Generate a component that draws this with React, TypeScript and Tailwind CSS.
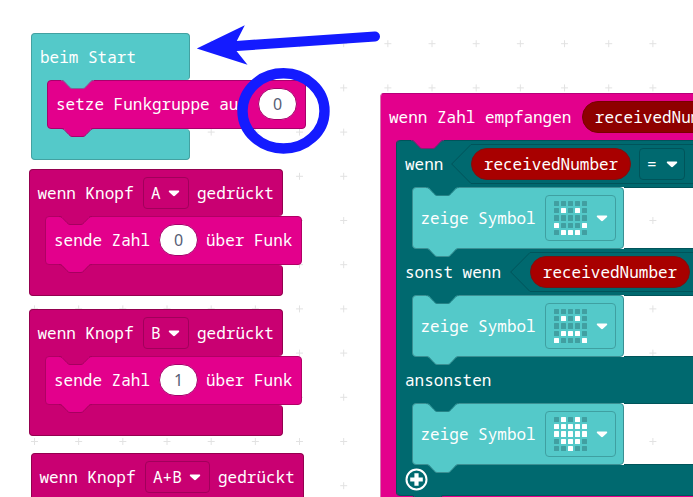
import type { ReactNode } from "react";

/* Caret of a block's drop-down field */
function Caret() {
  return (
    <svg className="block h-[7px] w-[12px] shrink-0" viewBox="0 0 12 7">
      <path d="M1.4 0.4H10.6Q11.8 0.6 11 1.9L7.2 5.6Q6 6.8 4.8 5.6L1 1.9Q0.2 0.6 1.4 0.4Z" fill="#fff" />
    </svg>
  );
}

/* Connector of a statement block: a socket at its top edge or a tab at its bottom edge */
function Connector({ fill, stroke, at }: { fill: string; stroke: string; at: "top" | "bottom" }) {
  const place = at === "top" ? "top-0" : "top-full -mt-px";
  return (
    <svg className={"absolute left-[14px] z-10 h-[10px] w-[34px] " + place} viewBox="0 0 34 10">
      <path d="M0 0H33Q31 0 30 1L25 6.500Q23.500 8.500 22 8.500H11Q9.500 8.500 8 6.500L3 1Q2 0 0 0Z" fill={fill} />
      <path d="M0 0.500Q2 0.500 3 1.500L8 6.700Q9.500 8.500 11 8.500H22Q23.500 8.500 25 6.700L30 1.500Q31 0.500 33 0.500" fill="none" stroke={stroke} />
    </svg>
  );
}

function Row({ className, children }: { className: string; children: ReactNode }) {
  return <div className={"flex items-center whitespace-pre " + className}>{children}</div>;
}

function NumberField({ value }: { value: string }) {
  return (
    <span className="flex h-[32px] w-[39px] shrink-0 items-center justify-center rounded-full border border-[#a7006b] bg-white font-['Noto_Sans',sans-serif] text-[#575e75]">
      {value}
    </span>
  );
}

function Variable({ className }: { className: string }) {
  return (
    <span className={"flex h-[32px] w-[160px] shrink-0 items-center justify-center rounded-full border " + className}>
      receivedNumber
    </span>
  );
}

function ButtonEvent({ place, button, menuWidth, width, children }: {
  place: string; button: string; menuWidth: string; width: string; children?: ReactNode;
}) {
  return (
    <section className={"absolute flex flex-col " + place + " " + width}>
      <Row className="h-[47px] shrink-0 rounded-t-[4px] rounded-br-[4px] border-x border-t border-[#94004f] bg-[#c90072] pl-[7.5px]">
        <span className="w-[105.5px] shrink-0">wenn Knopf</span>
        <span className={"flex h-[32px] shrink-0 items-center justify-between rounded-[4px] border border-[#a1005b] pr-[8px] pl-[7px] " + menuWidth}>
          {button}
          <Caret />
        </span>
        <span className="pl-[8px]">gedrückt</span>
      </Row>
      {children}
    </section>
  );
}

function SendNumber({ value }: { value: string }) {
  return (
    <>
      <div className="flex h-[49px] border-l border-[#94004f]">
        <div className="-mr-[6px] h-full w-[21px] shrink-0 bg-[#c90072]" />
        <div className="relative w-[257px] shrink-0">
          <Row className="h-[49px] rounded-[4px] border border-[#b10065] bg-[#e3008c] pb-[1px] pl-[8px]">
            <span className="w-[105px] shrink-0">sende Zahl</span>
            <NumberField value={value} />
            <span className="pl-[8px]">über Funk</span>
          </Row>
          <Connector at="top" fill="#c90072" stroke="#a6005f" />
          <Connector at="bottom" fill="#e3008c" stroke="#a6005f" />
        </div>
      </div>
      <div className="h-[31px] rounded-b-[4px] rounded-tr-[4px] border-x border-b border-[#94004f] bg-[#c90072]" />
    </>
  );
}

/* 5 by 5 LED picture, one string for each line */
function ShowIcon({ leds }: { leds: string[] }) {
  return (
    <div className="flex h-[62px]">
      <div className="-mr-[6px] w-[21px] shrink-0 bg-[#00696f]" />
      <div className="relative w-[212px] shrink-0">
        <Row className="h-[62px] rounded-[4px] border border-[#3a9093] bg-[#54c9c9] pl-[7.5px]">
          <span className="w-[124.5px] shrink-0">zeige Symbol</span>
          <span className="flex h-[46px] w-[71px] items-center justify-between rounded-[4px] border border-[#3fa0a1] pr-[7px] pl-[8px]">
            <span className="grid grid-cols-5 gap-x-[1.7px] gap-y-[1.9px]">
              {leds.join("").split("").map((led, i) => (
                <i key={i} className={"size-[5.3px] rounded-[0.5px] " + (led === "#" ? "bg-white" : "bg-[#419fa1]")} />
              ))}
            </span>
            <Caret />
          </span>
        </Row>
        <Connector at="top" fill="#00696f" stroke="#258387" />
        <Connector at="bottom" fill="#54c9c9" stroke="#3a9093" />
      </div>
      <div className="grow border-y border-[#00545a]" />
    </div>
  );
}

/* Hexagonal condition that runs on past the right edge of the workspace */
function Condition({ children }: { children: ReactNode }) {
  return (
    <div className="relative flex h-[40px] w-[360px] shrink-0 items-center pl-[20px]">
      <svg className="absolute inset-0" width="360" height="40" viewBox="0 0 360 40">
        <path d="M360 0.500H20L0.700 20L20 39.500H360" fill="none" stroke="#00545a" />
      </svg>
      <div className="relative flex items-center gap-[8px]">{children}</div>
    </div>
  );
}

const columns = Array.from({ length: 15 }, (_, i) => 34 + i * 44.17);
const lines = Array.from({ length: 11 }, (_, i) => 43.7 + i * 44.2);

export default function App() {
  return (
    <main className="relative h-[497px] w-[693px] overflow-hidden bg-white font-['Noto_Sans_Mono','Droid_Sans_Mono','DejaVu_Sans_Mono',monospace] text-[16px] leading-[20px] text-white">
      <svg className="absolute inset-0" width="693" height="497">
        {lines.map((y) => columns.map((x) => (
          <path key={x + "-" + y} d={`M${x - 3} ${y}h7M${x + 0.5} ${y - 3.5}v7`} stroke="#e2e2e2" fill="none" />
        )))}
      </svg>

      <section className="absolute top-[33px] left-[31px] flex w-[159px] flex-col">
        <Row className="h-[47px] rounded-t-[4px] rounded-br-[4px] border-x border-t border-[#43a1a1] bg-[#54c9c9] pl-[8px]">beim Start</Row>
        <div className="flex h-[49px] border-l border-[#43a1a1]">
          <div className="-mr-[6px] w-[21px] shrink-0 bg-[#54c9c9]" />
          <div className="relative w-[259px] shrink-0">
            <Row className="h-[49px] rounded-[4px] border border-[#a7006b] bg-[#e3008c] pb-[1px] pl-[8px]">
              <span className="w-[202px] shrink-0">setze Funkgruppe auf</span>
              <NumberField value="0" />
            </Row>
            <Connector at="top" fill="#54c9c9" stroke="#7b6a96" />
            <Connector at="bottom" fill="#e3008c" stroke="#a7006b" />
          </div>
        </div>
        <div className="h-[31px] rounded-b-[4px] rounded-tr-[4px] border-x border-b border-[#43a1a1] bg-[#54c9c9]" />
      </section>

      <ButtonEvent place="top-[169px] left-[29px]" width="w-[254px]" button="A" menuWidth="w-[46px]">
        <SendNumber value="0" />
      </ButtonEvent>
      <ButtonEvent place="top-[309px] left-[29px]" width="w-[254px]" button="B" menuWidth="w-[46px]">
        <SendNumber value="1" />
      </ButtonEvent>
      <ButtonEvent place="top-[453px] left-[31px]" width="w-[273px]" button="A+B" menuWidth="w-[65px]">
        <div className="h-[49px] bg-[#c90072]" />
      </ButtonEvent>

      <section className="absolute top-[93px] left-[380px] flex w-[440px] flex-col">
        <Row className="h-[47px] rounded-tl-[4px] border-t border-l border-t-[#b6007a] border-l-[#d875b0] bg-[#e3008c] pl-[8px]">
          <span className="w-[193px] shrink-0">wenn Zahl empfangen</span>
          <Variable className="border-[#780000] bg-[#8e0000]" />
        </Row>
        <div className="flex border-l border-[#d875b0]">
          <div className="-mr-[6px] w-[21px] shrink-0 bg-[#e3008c]" />
          <div className="relative w-[424px] rounded-l-[4px] border-l border-[#00545a]">
            <Row className="h-[47px] rounded-tl-[4px] border-t border-[#00545a] bg-[#00696f] pl-[8px]">
              <span className="w-[46px] shrink-0">wenn</span>
              <Condition>
                <Variable className="border-[#7e1010] bg-[#a80000]" />
                <span className="flex h-[32px] w-[46px] shrink-0 items-center justify-between rounded-[4px] border border-[#00545a] pr-[8px] pl-[7px]">
                  = <Caret />
                </span>
                <NumberField value="0" />
              </Condition>
            </Row>
            <ShowIcon leds={[".....", ".#.#.", ".....", "#...#", ".###."]} />
            <Row className="h-[46px] bg-[#00696f] pl-[8px]">
              <span className="w-[105px] shrink-0">sonst wenn</span>
              <Condition>
                <Variable className="border-[#7e1010] bg-[#a80000]" />
              </Condition>
            </Row>
            <ShowIcon leds={[".....", ".#.#.", ".....", ".###.", "#...#"]} />
            <Row className="h-[46px] bg-[#00696f] pl-[8px]">ansonsten</Row>
            <ShowIcon leds={[".#.#.", "#####", "#####", ".###.", "..#.."]} />
            <div className="h-[31px] rounded-bl-[4px] border-b border-[#00545a] bg-[#00696f] pt-[3px] pl-[8px]">
              <svg className="block" width="23" height="23" viewBox="0 0 23 23">
                <circle cx="11.500" cy="11.500" r="10" fill="none" stroke="#fff" strokeWidth="2" />
                <path d="M11.500 7.300V15.700M7.300 11.500H15.700" stroke="#fff" strokeWidth="4.200" strokeLinecap="square" strokeLinejoin="round" />
              </svg>
            </div>
            <Connector at="top" fill="#e3008c" stroke="#7a2670" />
            <Connector at="bottom" fill="#00696f" stroke="#00545a" />
          </div>
        </div>
        <div className="h-[31px] border-l border-[#d875b0] bg-[#e3008c]" />
      </section>

      <svg className="absolute top-0 left-0 z-20" width="400" height="170" viewBox="0 0 400 170">
        <ellipse cx="283.500" cy="110.900" rx="41" ry="37.600" fill="none" stroke="#141bff" strokeWidth="10.400" />
        <path d="M233 46.200L375 36.500" stroke="#141bff" strokeWidth="10" strokeLinecap="round" />
        <path d="M196.800 48.500L244.800 25.200L236.500 41.500V51L247.500 64.800Z" fill="#141bff" />
      </svg>
    </main>
  );
}
